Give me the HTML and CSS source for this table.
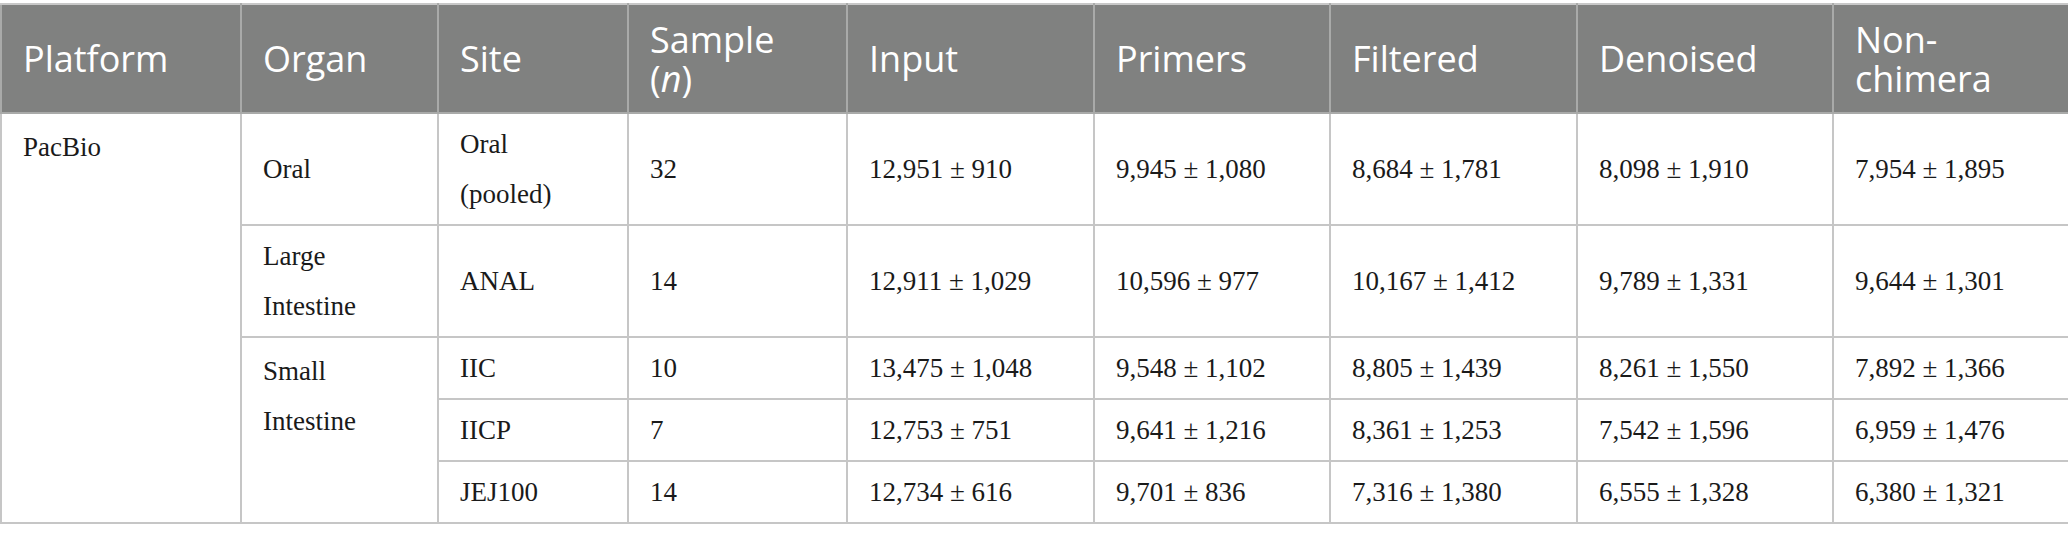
FILE: index.html
```html
<!DOCTYPE html>
<html lang="en">
<head>
<meta charset="utf-8">
<title>Read counts</title>
<link rel="stylesheet" href="styles.css">
</head>
<body>
<table class="data">
  <colgroup>
    <col class="c1"><col class="c2"><col class="c3"><col class="c4"><col class="c5">
    <col class="c6"><col class="c7"><col class="c8"><col class="c9">
  </colgroup>
  <thead>
    <tr>
      <th>Platform</th>
      <th>Organ</th>
      <th>Site</th>
      <th>Sample<br>(<i>n</i>)</th>
      <th>Input</th>
      <th>Primers</th>
      <th>Filtered</th>
      <th>Denoised</th>
      <th>Non-<br>chimera</th>
    </tr>
  </thead>
  <tbody>
    <tr>
      <td rowspan="5" class="top">PacBio</td>
      <td>Oral</td>
      <td>Oral<br>(pooled)</td>
      <td>32</td>
      <td>12,951 ± 910</td>
      <td>9,945 ± 1,080</td>
      <td>8,684 ± 1,781</td>
      <td>8,098 ± 1,910</td>
      <td>7,954 ± 1,895</td>
    </tr>
    <tr>
      <td>Large<br>Intestine</td>
      <td>ANAL</td>
      <td>14</td>
      <td>12,911 ± 1,029</td>
      <td>10,596 ± 977</td>
      <td>10,167 ± 1,412</td>
      <td>9,789 ± 1,331</td>
      <td>9,644 ± 1,301</td>
    </tr>
    <tr>
      <td rowspan="3" class="top">Small<br>Intestine</td>
      <td>IIC</td>
      <td>10</td>
      <td>13,475 ± 1,048</td>
      <td>9,548 ± 1,102</td>
      <td>8,805 ± 1,439</td>
      <td>8,261 ± 1,550</td>
      <td>7,892 ± 1,366</td>
    </tr>
    <tr>
      <td>IICP</td>
      <td>7</td>
      <td>12,753 ± 751</td>
      <td>9,641 ± 1,216</td>
      <td>8,361 ± 1,253</td>
      <td>7,542 ± 1,596</td>
      <td>6,959 ± 1,476</td>
    </tr>
    <tr>
      <td>JEJ100</td>
      <td>14</td>
      <td>12,734 ± 616</td>
      <td>9,701 ± 836</td>
      <td>7,316 ± 1,380</td>
      <td>6,555 ± 1,328</td>
      <td>6,380 ± 1,321</td>
    </tr>
  </tbody>
</table>
</body>
</html>
```
FILE: styles.css
```css
html, body {
  margin: 0;
  padding: 0;
  background: #ffffff;
}
body {
  padding-top: 3px;
}
.data {
  border-collapse: collapse;
  table-layout: fixed;
  width: 2068px;
}
.c1 { width: 240px; }
.c2 { width: 197px; }
.c3 { width: 190px; }
.c4 { width: 219px; }
.c5 { width: 247px; }
.c6 { width: 236px; }
.c7 { width: 247px; }
.c8 { width: 256px; }
.c9 { width: 236px; }
.data th {
  background: #808180;
  color: #ffffff;
  font-family: "Open Sans", "Noto Sans", sans-serif;
  font-weight: 400;
  font-size: 36px;
  line-height: 39px;
  text-align: left;
  vertical-align: middle;
  height: 107px;
  padding: 0 6px 0 21px;
  border: 2px solid #a9aaa9;
  border-top-color: #c8c8c8;
}
.data th i {
  font-style: italic;
}
.data td {
  font-family: "Liberation Serif", "Times New Roman", serif;
  font-size: 27px;
  line-height: 50px;
  color: #1a1a1a;
  text-align: left;
  vertical-align: middle;
  padding: 5px 10px 5px 21px;
  border: 2px solid #c6c6c6;
  white-space: nowrap;
}
.data td.top {
  vertical-align: top;
  padding-top: 8px;
}
```
